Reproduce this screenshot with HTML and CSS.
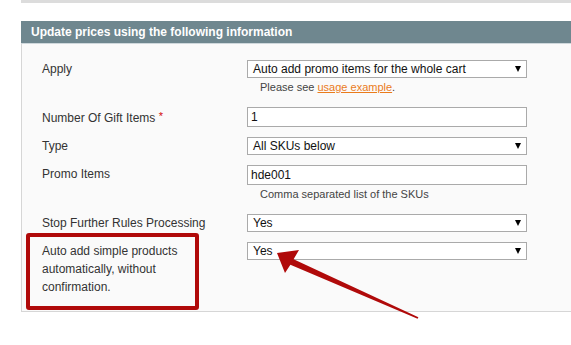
FILE: index.html
```html
<!DOCTYPE html>
<html>
<head>
<meta charset="utf-8">
<link rel="stylesheet" href="styles.css">
</head>
<body>
<div class="page">
  <div class="topbar"></div>
  <div class="fieldset">
    <div class="legend">Update prices using the following information</div>
    <div class="content">
      <div class="row">
        <div class="label">Apply</div>
        <div class="value">
          <div class="select"><span>Auto add promo items for the whole cart</span><i class="caret"></i></div>
          <div class="note">Please see <a href="#">usage example</a>.</div>
        </div>
      </div>
      <div class="row">
        <div class="label">Number Of Gift Items <span class="req">*</span></div>
        <div class="value"><input class="input" type="text" value="1"></div>
      </div>
      <div class="row">
        <div class="label">Type</div>
        <div class="value"><div class="select"><span>All SKUs below</span><i class="caret"></i></div></div>
      </div>
      <div class="row">
        <div class="label">Promo Items</div>
        <div class="value">
          <input class="input" type="text" value="hde001">
          <div class="note">Comma separated list of the SKUs</div>
        </div>
      </div>
      <div class="row">
        <div class="label">Stop Further Rules Processing</div>
        <div class="value"><div class="select"><span>Yes</span><i class="caret"></i></div></div>
      </div>
      <div class="row last">
        <div class="label">Auto add simple products<br>automatically, without<br>confirmation.</div>
        <div class="value"><div class="select"><span>Yes</span><i class="caret"></i></div></div>
      </div>
    </div>
  </div>
  <div class="highlight"></div>
  <svg class="arrow" width="571" height="345" viewBox="0 0 571 345">
    <polygon fill="#b00a0a" points="277,253 299,250 293.6,259.2 418.4,317.2 417.6,318.8 290.4,264.8 285,273"/>
  </svg>
</div>
</body>
</html>
```
FILE: styles.css
```css
* { box-sizing: border-box; }
html, body { margin: 0; padding: 0; background: #fff; }
body {
  font-family: "Liberation Sans", Arial, sans-serif;
  font-size: 12px;
  color: #333;
}
.page {
  position: relative;
  width: 571px;
  height: 345px;
  overflow: hidden;
}
.topbar {
  margin-left: 21px;
  height: 3px;
  background: #dcdcdc;
}
.fieldset {
  margin-left: 21px;
  margin-top: 18px;
}
.legend {
  height: 23px;
  background: #6f878f;
  border-bottom: 1px solid #cfd8dc;
  color: #fff;
  font-weight: bold;
  font-size: 12px;
  line-height: 22px;
  padding-left: 10px;
}
.content {
  background: #fafafa;
  border-left: 1px solid #d6d6d6;
  border-bottom: 1px solid #d6d6d6;
  padding: 16px 0 15px 20px;
}
.row {
  display: flex;
  margin-bottom: 10px;
}
.row.last { margin-bottom: 0; }
.label {
  width: 205px;
  flex: none;
  line-height: 18px;
}
.req { color: #d40707; font-size: 11px; vertical-align: 2px; }
.value { width: 280px; flex: none; }
.select {
  height: 18px;
  border: 1px solid #aaa;
  background: #fff;
  display: flex;
  align-items: center;
  justify-content: space-between;
  padding: 0 5px 0 5px;
  color: #111;
  line-height: 16px;
}
.caret {
  width: 0;
  height: 0;
  border-left: 3.5px solid transparent;
  border-right: 3.5px solid transparent;
  border-top: 6px solid #000;
}
.input {
  display: block;
  width: 280px;
  height: 20px;
  border: 1px solid #aaa;
  background: #fff;
  padding: 0 3px;
  margin: 0;
  font-family: "Liberation Sans", Arial, sans-serif;
  font-size: 12px;
  color: #111;
  outline: none;
}
.note {
  font-size: 11px;
  line-height: 14px;
  margin: 2px 0 3px 13px;
  color: #444;
}
.note a { color: #ea7b1c; }
.highlight {
  position: absolute;
  left: 26px;
  top: 233px;
  width: 173px;
  height: 77px;
  border: 4px solid #b00a0a;
  border-radius: 3px;
}
.arrow {
  position: absolute;
  left: 0;
  top: 0;
}
```
